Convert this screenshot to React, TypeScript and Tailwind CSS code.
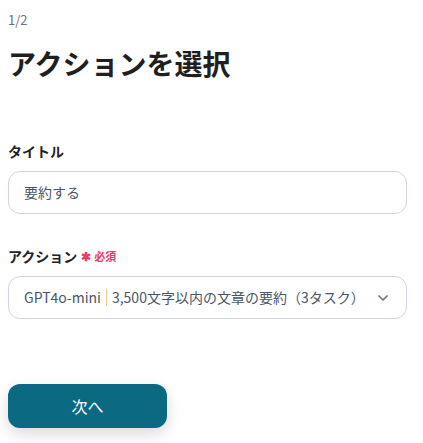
import { ChevronDown } from "lucide-react";

const font = "font-['Noto_Sans_CJK_JP','Noto_Sans',sans-serif]";

export default function App() {
  return (
    <div className={`min-h-[443px] bg-white pl-2 pr-4 pt-[10px] text-[#222] ${font}`}>
      <p className="text-[13px] leading-5 text-gray-500">1/2</p>

      <h1 className="mt-[13px] text-[28px] font-bold leading-[40px] text-[#1f1f1f]">
        アクションを選択
      </h1>

      <div className="mt-[58px]">
        <label className="block text-[14px] font-bold leading-5 text-[#222]">タイトル</label>
        <div className="mt-[10px] flex h-[43px] items-center rounded-xl border border-gray-300 px-[15px] text-[14px] text-gray-600">
          要約する
        </div>
      </div>

      <div className="mt-[32px]">
        <label className="flex items-center text-[14px] font-bold leading-5 text-[#222]">
          アクション
          <span className="ml-1 text-[12px] font-bold text-[#f0386b]">✱</span>
          <span className="ml-[3px] text-[11px] font-bold text-[#f0386b]">必須</span>
        </label>
        <div className="mt-[10px] flex h-[43px] items-center rounded-xl border border-gray-300 pl-[15px] pr-[15px] text-[14px] text-gray-600">
          <span>GPT4o-mini</span>
          <span className="mx-[5px] h-[17px] w-px bg-[#f3c98b]" />
          <span className="flex-1 truncate">3,500文字以内の文章の要約（3タスク）</span>
          <ChevronDown className="h-4 w-4 shrink-0 text-gray-500" strokeWidth={2.5} />
        </div>
      </div>

      <button
        type="button"
        className="mt-[65px] flex h-[44px] w-[159px] items-center justify-center rounded-xl bg-[#0b6a82] text-[16px] text-white shadow-[0_6px_16px_rgba(0,0,0,0.15)]"
      >
        次へ
      </button>
    </div>
  );
}
